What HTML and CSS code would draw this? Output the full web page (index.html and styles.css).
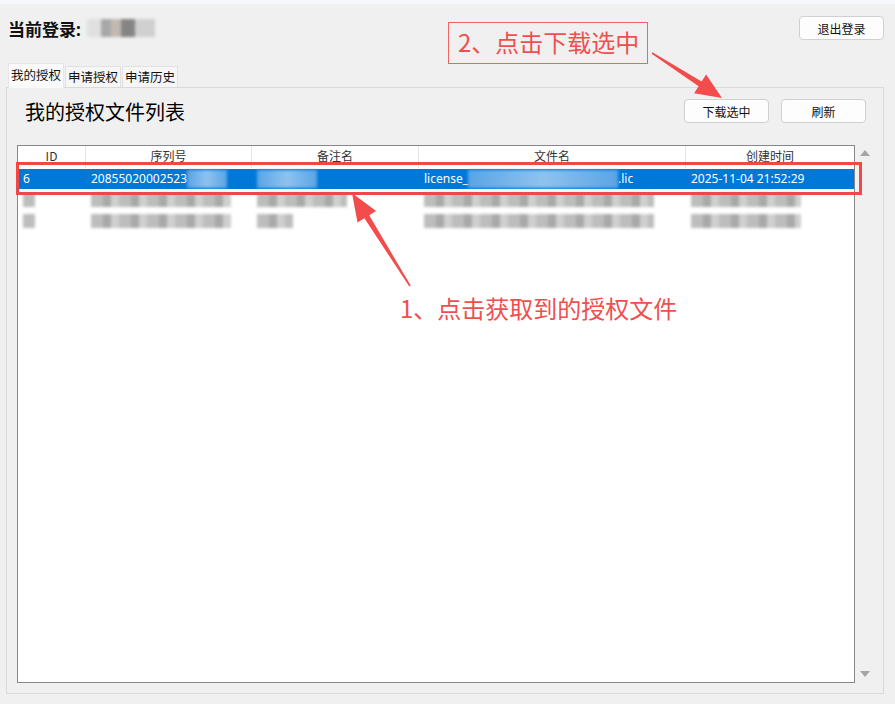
FILE: index.html
```html
<!DOCTYPE html>
<html lang="zh-CN">
<head>
    <meta charset="UTF-8" />
    <title>我的授权</title>
    <link rel="stylesheet" href="styles.css">
</head>
<body>
    <div class="topbar">
        <div class="login">当前登录: <span class="blur user"></span></div>
        <button class="btn">退出登录</button>
    </div>

    <div class="tabs">
        <div class="tab active">我的授权</div>
        <div class="tab">申请授权</div>
        <div class="tab">申请历史</div>
    </div>

    <div class="pane">
        <div class="pane-head">
            <h2>我的授权文件列表</h2>
            <div class="actions">
                <button class="btn">下载选中</button>
                <button class="btn">刷新</button>
            </div>
        </div>

        <div class="list-area">
            <div class="list">
                <div class="row head">
                    <div>ID</div>
                    <div>序列号</div>
                    <div>备注名</div>
                    <div>文件名</div>
                    <div>创建时间</div>
                </div>
                <div class="row item selected">
                    <div>6</div>
                    <div>20855020002523<span class="blur light w40"></span></div>
                    <div><span class="blur light w60"></span></div>
                    <div>license_<span class="blur light w150"></span>.lic</div>
                    <div>2025-11-04 21:52:29</div>
                </div>
                <div class="row item">
                    <div><span class="blur gray w12"></span></div>
                    <div><span class="blur gray w140"></span></div>
                    <div><span class="blur gray w90"></span></div>
                    <div><span class="blur gray w230"></span></div>
                    <div><span class="blur gray w110"></span></div>
                </div>
                <div class="row item">
                    <div><span class="blur gray w12"></span></div>
                    <div><span class="blur gray w140"></span></div>
                    <div><span class="blur gray w36"></span></div>
                    <div><span class="blur gray w230"></span></div>
                    <div><span class="blur gray w110"></span></div>
                </div>
            </div>
            <div class="scrollbar">
                <span class="arrow up"></span>
                <span class="arrow down"></span>
            </div>
        </div>
    </div>

    <!-- step notes drawn over the window -->
    <div class="mark-row"></div>
    <div class="note note-2">2、点击下载选中</div>
    <div class="note note-1">1、点击获取到的授权文件</div>
    <svg class="arrows" width="895" height="704" viewBox="0 0 895 704">
        <polygon points="410.7,285.6 369.2,215.3 376.1,211.0 352,193 357.5,222.6 364.4,218.3 409.3,286.4" />
        <polygon points="651.6,53.7 698.6,86.3 694.1,93.2 722,98 706.1,74.6 701.6,81.5 652.4,52.3" />
    </svg>
</body>
</html>
```

FILE: styles.css
```css
body {
    margin: 0;
    width: 895px;
    height: 704px;
    overflow: hidden;
    position: relative;
    background-color: #f0f0f0;
    border-top: 4px solid #f6f7fa;
    box-sizing: border-box;
    font-family: "Noto Sans", "Noto Sans CJK SC", sans-serif;
    color: #1a1a1a;
}
.topbar {
    display: flex;
    justify-content: space-between;
    align-items: center;
    height: 24px;
    padding: 12px 11px 0 8px;
}
.login {
    display: flex;
    align-items: center;
    font-size: 17px;
    font-weight: bold;
    color: #111;
}
.btn {
    width: 85px;
    height: 24px;
    padding: 0;
    background-color: #fdfdfd;
    border: 1px solid #d0d0d0;
    border-radius: 4px;
    font-family: "Noto Sans CJK SC", sans-serif;
    font-size: 12px;
    color: #111;
}
.tabs {
    display: flex;
    align-items: flex-end;
    height: 24px;
    margin-top: 23px;
    padding-left: 8px;
    position: relative;
    z-index: 1;
}
.tab {
    height: 20px;
    line-height: 20px;
    padding: 0 2px;
    margin-left: 1px;
    background-color: #f6f6f6;
    border: 1px solid #e2e2e2;
    border-bottom: none;
    font-family: "Noto Sans CJK SC", sans-serif;
    font-size: 12.5px;
    color: #111;
}
.tab.active {
    height: 24px;
    line-height: 22px;
    margin-left: 0;
    margin-bottom: -1px;
    background-color: #fafafa;
    border-color: #e6e6e6;
}
.pane {
    height: 605px;
    margin: 0 11px 0 6px;
    border: 1px solid #dadada;
}
.pane-head {
    display: flex;
    justify-content: space-between;
    align-items: center;
    height: 24px;
    padding: 11px 17px 0 18px;
}
.pane-head h2 {
    margin: 0;
    font-family: "Noto Sans CJK SC", sans-serif;
    font-size: 20px;
    font-weight: normal;
    color: #000;
}
.actions {
    display: flex;
    gap: 12px;
}
.list-area {
    display: flex;
    margin-top: 22px;
    padding-left: 10px;
}
.list {
    width: 836px;
    height: 536px;
    background-color: #fff;
    border: 1px solid #85878c;
}
.row {
    display: grid;
    grid-template-columns: 68px 166px 167px 267px 1fr;
    font-size: 12px;
}
.row.head {
    height: 22px;
    line-height: 20px;
    color: #333;
    font-family: "Noto Sans CJK SC", sans-serif;
    text-align: center;
}
.row.head > div {
    border-right: 1px solid #e5e5e5;
}
.row.head > div:last-child {
    border-right: none;
}
.row.item {
    height: 20px;
    line-height: 20px;
    margin-left: 1px;
    margin-top: 1px;
}
.row.item > div {
    display: flex;
    align-items: center;
    padding-left: 4px;
    white-space: nowrap;
}
.row.selected {
    background-color: #0078d7;
    color: #fff;
}
.blur {
    display: inline-block;
    height: 14px;
    filter: blur(1.5px);
}
.blur.user {
    width: 68px;
    height: 18px;
    margin-left: 6px;
    background: linear-gradient(90deg, #e0e0e0 0 20%, #a8a8a8 20% 35%, #c2bab2 35% 50%, #858585 50% 70%, #d0d0d0 70% 100%);
}
.blur.light {
    height: 18px;
    background: linear-gradient(90deg, #5aa4e4, #8fc2ee 50%, #5aa4e4);
}
.blur.gray {
    background: repeating-linear-gradient(90deg, #bdbdbd 0 12px, #a9a9a9 12px 20px, #cfcfcf 20px 28px);
}
.w12 { width: 12px; }
.w36 { width: 36px; }
.w40 { width: 40px; }
.w60 { width: 60px; }
.w90 { width: 90px; }
.w110 { width: 110px; }
.w140 { width: 140px; }
.w150 { width: 150px; }
.w230 { width: 230px; }
.scrollbar {
    display: flex;
    flex-direction: column;
    justify-content: space-between;
    align-items: center;
    width: 20px;
    height: 538px;
    padding: 5px 0 6px;
    box-sizing: border-box;
}
.arrow {
    width: 0;
    height: 0;
    border-left: 5px solid transparent;
    border-right: 5px solid transparent;
}
.arrow.up {
    border-bottom: 6px solid #a4a4a4;
}
.arrow.down {
    border-top: 6px solid #a4a4a4;
}
.mark-row {
    position: absolute;
    left: 16px;
    top: 158px;
    width: 840px;
    height: 27px;
    border: 3px solid #f04848;
}
.note {
    position: absolute;
    font-family: "Noto Sans CJK SC", sans-serif;
    font-size: 24px;
    color: #f04f4f;
    white-space: nowrap;
}
.note-2 {
    left: 448px;
    top: 18px;
    width: 189px;
    height: 40px;
    line-height: 38px;
    padding-left: 9px;
    border: 1.5px solid #f06464;
}
.note-1 {
    left: 400px;
    top: 286px;
}
.arrows {
    position: absolute;
    left: 0;
    top: -4px;
    pointer-events: none;
}
.arrows polygon {
    fill: #f24c4c;
}
```
